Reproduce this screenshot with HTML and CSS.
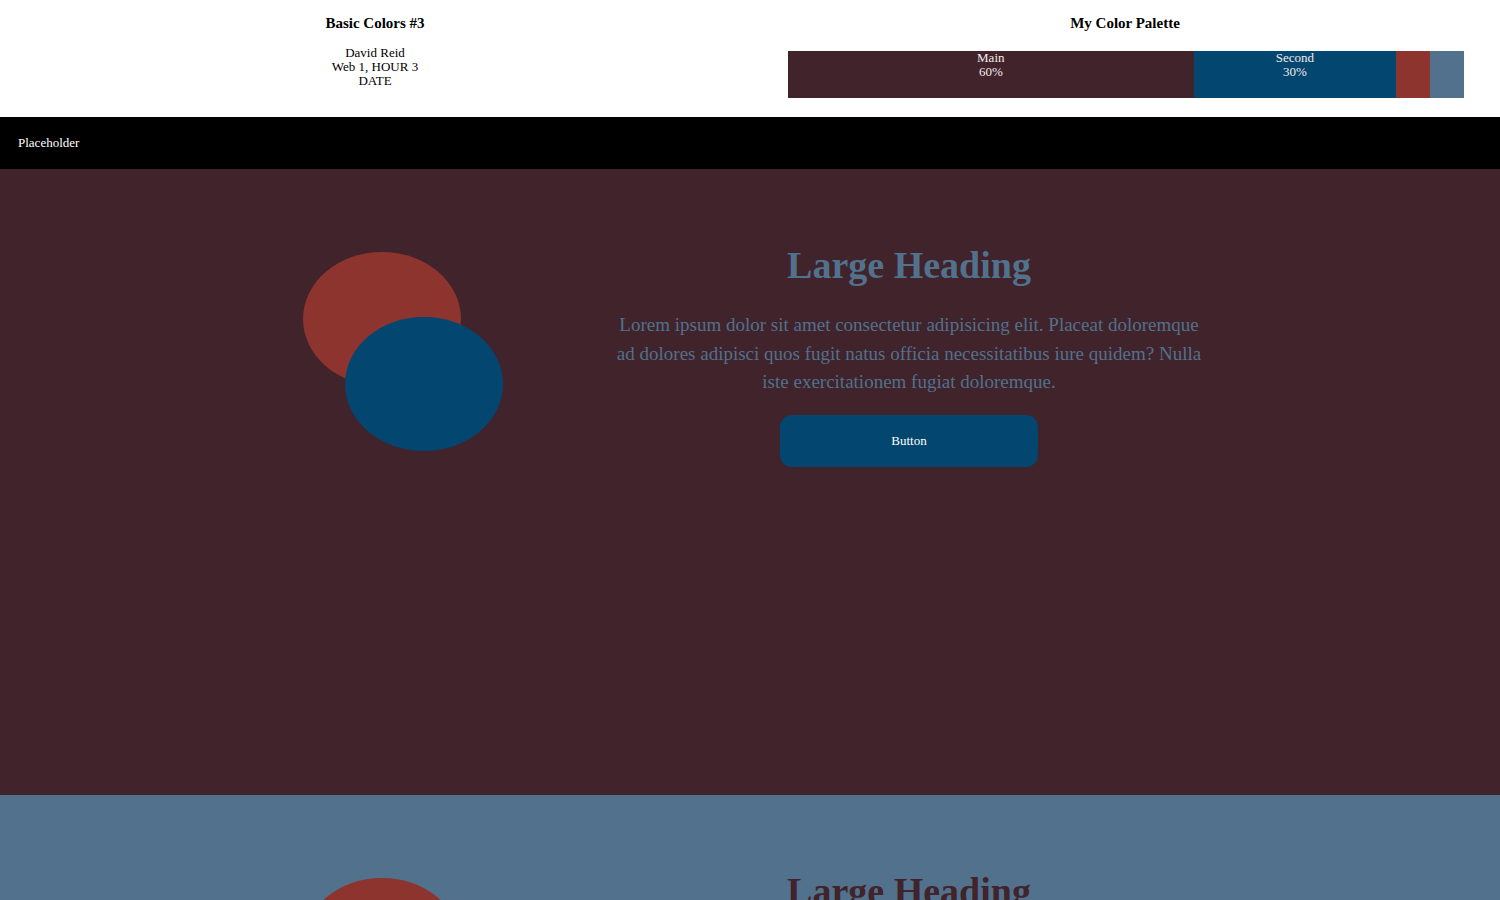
FILE: index.html
```html
<!DOCTYPE html>
<html lang="en">
<head>
<meta charset="utf-8">
<title>Basic Colors #3</title>
<link rel="stylesheet" href="styles.css">
</head>
<body>
<header class="top">
  <div class="info">
    <h3 class="top-title">Basic Colors #3</h3>
    <p class="meta">David Reid<br>Web 1, HOUR 3<br>DATE</p>
  </div>
  <div class="palette-col">
    <h3 class="top-title">My Color Palette</h3>
    <div class="palette">
      <div class="swatch main" style="width:60%">Main<br>60%</div>
      <div class="swatch second" style="width:30%">Second<br>30%</div>
      <div class="swatch accent" style="width:5%"></div>
      <div class="swatch slate" style="width:5%"></div>
    </div>
  </div>
</header>
<nav class="nav"><span class="nav-item">Placeholder</span></nav>
<section class="hero hero-dark">
  <div class="hero-inner">
    <div class="art">
      <div class="blob blob-red"></div>
      <div class="blob blob-blue"></div>
    </div>
    <div class="copy">
      <h1 class="heading">Large Heading</h1>
      <p class="lead">Lorem ipsum dolor sit amet consectetur adipisicing elit. Placeat doloremque ad dolores adipisci quos fugit natus officia necessitatibus iure quidem? Nulla iste exercitationem fugiat doloremque.</p>
      <button class="btn">Button</button>
    </div>
  </div>
</section>
<section class="hero hero-slate">
  <div class="hero-inner">
    <div class="art">
      <div class="blob blob-red"></div>
      <div class="blob blob-blue"></div>
    </div>
    <div class="copy">
      <h1 class="heading">Large Heading</h1>
      <p class="lead">Lorem ipsum dolor sit amet consectetur adipisicing elit. Placeat doloremque ad dolores adipisci quos fugit natus officia necessitatibus iure quidem? Nulla iste exercitationem fugiat doloremque.</p>
      <button class="btn">Button</button>
    </div>
  </div>
</section>
</body>
</html>
```
FILE: styles.css
```css
* { box-sizing: border-box; }
body {
  margin: 0;
  font-family: "Liberation Serif", "Times New Roman", serif;
  color: #000;
  background: #fff;
}
.top {
  display: flex;
  height: 117px;
  background: #fff;
}
.info, .palette-col {
  flex: 1;
  text-align: center;
  padding-top: 15px;
}
.top-title {
  margin: 0;
  font-size: 15px;
  line-height: 17px;
  font-weight: bold;
}
.meta {
  margin: 14px 0 0;
  font-size: 13px;
  line-height: 14px;
}
.palette {
  display: flex;
  width: 676px;
  height: 47px;
  margin: 19px 0 0 38px;
}
.swatch {
  height: 100%;
  font-size: 13px;
  line-height: 14px;
  color: #f3eaea;
  text-align: center;
}
.main { background: #40232b; }
.second { background: #03466f; }
.accent { background: #8c342d; }
.slate { background: #52718c; }
.nav {
  height: 52px;
  background: #000;
  display: flex;
  align-items: center;
  padding-left: 18px;
}
.nav-item {
  color: #fff;
  font-size: 13px;
}
.hero {
  height: 626px;
  padding-top: 74px;
}
.hero-dark { background: #40232b; }
.hero-slate { background: #52718c; }
.hero-inner {
  width: 900px;
  margin: 0 0 0 calc(50% - 447px);
  display: flex;
  align-items: flex-start;
  gap: 112px;
}
.art {
  position: relative;
  width: 200px;
  height: 200px;
  flex: none;
  margin-top: 9px;
}
.blob {
  position: absolute;
  width: 158px;
  height: 134px;
  border-radius: 50%;
}
.blob-red { left: 0; top: 0; background: #8c342d; }
.blob-blue { left: 42px; top: 65px; background: #03466f; }
.copy {
  flex: 1;
  text-align: center;
}
.heading {
  margin: 0;
  font-size: 38px;
  line-height: 44px;
  font-weight: bold;
  color: #52718c;
}
.hero-slate .heading { color: #40232b; }
.lead {
  margin: 24px 0 0;
  font-size: 19px;
  line-height: 28.5px;
  color: #52718c;
}
.hero-slate .lead { color: #40232b; }
.btn {
  display: block;
  margin: 18px auto 0;
  width: 258px;
  height: 52px;
  border: none;
  border-radius: 12px;
  background: #03466f;
  color: #fff;
  font-family: "Liberation Serif", "Times New Roman", serif;
  font-size: 13px;
}
```
